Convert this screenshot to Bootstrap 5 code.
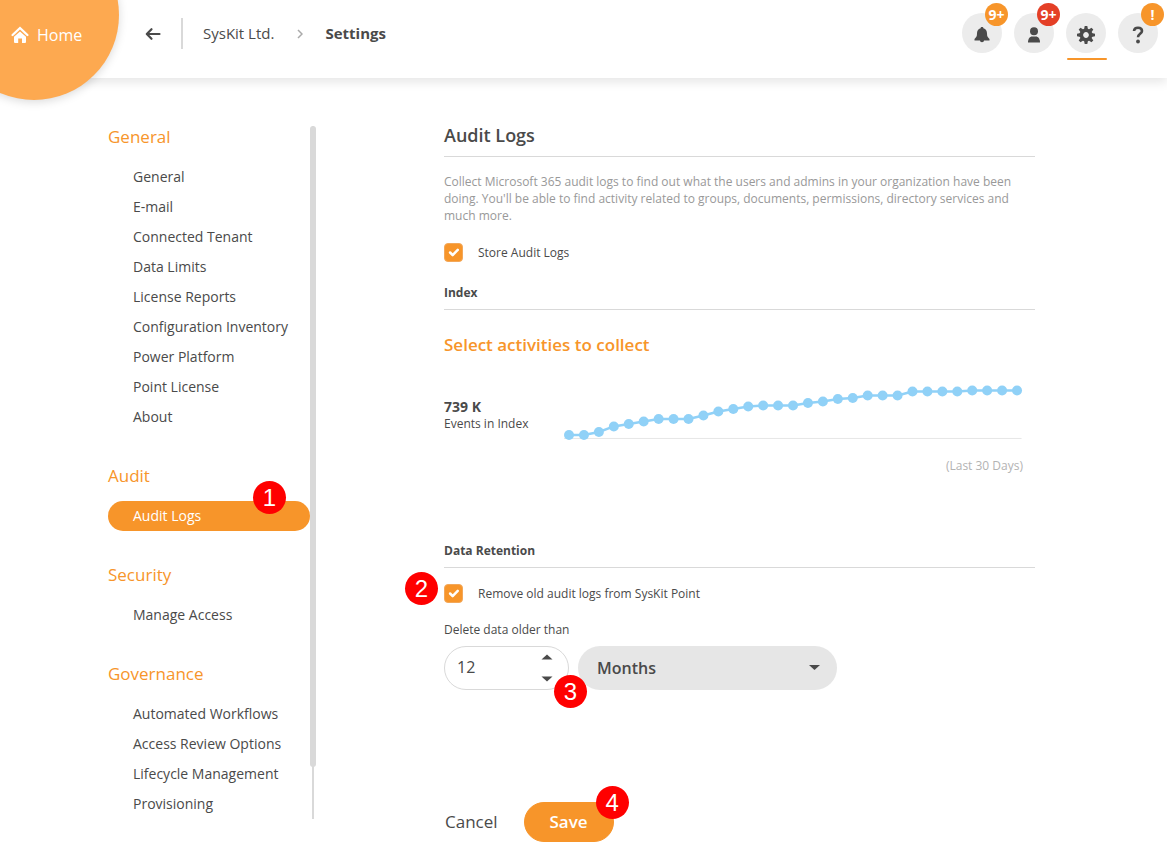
<!DOCTYPE html>
<html lang="en">
<head>
<meta charset="utf-8">
<meta name="viewport" content="width=device-width, initial-scale=1">
<title>Settings - Audit Logs</title>
<link href="https://cdn.jsdelivr.net/npm/bootstrap@5.3.0/dist/css/bootstrap.min.css" rel="stylesheet">
<style>
:root { --accent: #f7952a; --ink: #4a4a4a; --rule: #d9d9d9; }
body { font-family: "Open Sans", "Noto Sans", sans-serif; font-size: 12px; line-height: 17px; color: var(--ink); background: #fff; }
a { text-decoration: none; color: inherit; }

.topbar { height: 78px; padding: 0 9px 0 145px; box-shadow: 0 4px 10px rgba(0,0,0,.1); }
.home-link { left: -51px; top: -70px; width: 170px; height: 170px; padding: 40px 0 0 62px; background: #fda950; color: #fff; font-size: 16px; box-shadow: 0 2px 10px rgba(0,0,0,.15); }
.home-link:hover { color: #fff; }
.crumbs { height: 67px; font-size: 15px; }
.crumb-rule { width: 2px; height: 31px; background: var(--rule); margin: 0 20px; }
.crumb-sep { margin: 0 22px 0 23px; }
.tool-btn { width: 40px; height: 40px; background: #ececec; color: var(--ink); }
.tool-group { gap: 12px; margin-top: 13px; }
.tool-badge { top: -10px; left: 23px; width: 23px; height: 23px; font-size: 14px; font-weight: 700; color: #fff; background: var(--accent); }
.tool-badge.alert-red { background: #e43f26; }
.tool-on::after { content: ""; position: absolute; left: 1px; right: -1px; bottom: -7px; height: 2px; border-radius: 2px; background: var(--accent); }

.page-body { padding: 44px 132px 13px 108px; }
.side-nav { width: 202px; }
.side-title { font-size: 17px; line-height: 30px; margin: 0 0 10px; font-weight: 400; color: var(--accent); }
.side-nav section + section { margin-top: 29px; }
.side-link { padding: 0 25px; line-height: 30px; font-size: 14px; border-radius: 15px; }
.side-link.current { background: var(--accent); color: #fff; }
.scroll-track { width: 6px; height: 693px; background: linear-gradient(#d9d9d9, #d9d9d9) center / 2px 100% no-repeat; }
.scroll-thumb { height: 641px; border-radius: 3px; background: #d9d9d9; }

.settings { margin-left: 128px; }
.main-title { font-size: 18px; line-height: 26px; font-weight: 600; padding-bottom: 8px; margin: 0 0 16px; border-bottom: 1px solid var(--rule); }
.sub-title { font-size: 12px; line-height: 18px; font-weight: 700; padding-bottom: 7px; margin: 0; border-bottom: 1px solid var(--rule); }
.sub-title.index-title { margin-top: 22px; }
.intro { color: #999; margin: 0 0 19px; }
.tick-row { gap: 15px; height: 19px; }
.form-check-input.tick { width: 19px; height: 19px; margin: 0; border-radius: 4px; border: 1px solid #f3a85a; }
.form-check-input.tick:checked { background-color: var(--accent); border-color: #f3a85a; background-size: 17px; }
.activities { font-size: 17px; line-height: 24px; font-weight: 600; color: var(--accent); margin: 23px 0 27px; }
.total { font-size: 14px; line-height: 16px; font-weight: 700; }
.chart { margin: 0 12px 0 35px; min-width: 0; }
.period { color: #b3b3b3; margin: 17px 0 68px; }
.age-label { margin-top: 18px; }
.age-row { gap: 9px; }
.num-box { width: 125px; height: 44px; border: 1px solid var(--rule); border-radius: 22px; padding: 0 15px 0 12px; }
.num-box input { width: 70px; border: 0; padding: 0; font-size: 16px; color: var(--ink); outline: 0; }
.step { border: 0; background: none; padding: 0; line-height: 0; color: var(--ink); }
.unit-select { height: 44px; border: 0; border-radius: 22px; width: 259px; padding: 0 40px 0 19px; font-size: 16px; font-weight: 600; color: var(--ink); background-color: #e6e6e6; background-size: 11px 5px; background-position: right 17px top 19px;
  --bs-form-select-bg-img: url("data:image/svg+xml,%3Csvg xmlns='http://www.w3.org/2000/svg' viewBox='0 0 11 5'%3E%3Cpath d='M0 0h11L5.5 5z' fill='%234a4a4a'/%3E%3C/svg%3E");
  background-image: var(--bs-form-select-bg-img); }
.actions { margin-top: 112px; gap: 26px; }
.btn-cancel { border: 0; background: none; padding: 0 0 0 1px; font-size: 17px; color: var(--ink); }
.btn-save { --bs-btn-bg: #f7952a; --bs-btn-color: #fff; --bs-btn-border-color: #f7952a; --bs-btn-hover-bg: #e98618; --bs-btn-hover-color: #fff; width: 90px; height: 40px; border-radius: 20px; font-size: 17px; font-weight: 600; padding: 0; }
.callout { width: 33px; height: 33px; background: #f00; color: #fff; font: 24px/33px "Liberation Sans", sans-serif; text-align: center; border-radius: 50%; position: absolute; z-index: 2; }
.callout-nav { right: 24px; top: -20px; }
.callout-tick { left: -39px; top: -12px; }
.callout-num { right: -19px; bottom: -19px; }
.callout-save { right: -16px; top: -17px; }
</style>
</head>
<body>
<header class="topbar d-flex justify-content-between position-relative">
  <a class="home-link rounded-circle position-absolute d-flex align-items-center" href="#">
    <svg width="18" height="18" viewBox="0 0 18 18" class="me-2" aria-hidden="true"><path d="M1.6 9 9 2l7.400 7" fill="none" stroke="#fff" stroke-width="2.300" stroke-linecap="round"/><path d="M3 10.800 9 5.600l6 5.200V16a1 1 0 0 1-1 1h-3v-4.500H7.200V17H4a1 1 0 0 1-1-1z" fill="#fff"/></svg>Home
  </a>
  <nav class="crumbs d-flex align-items-center" aria-label="Breadcrumb">
    <a href="#" aria-label="Back"><svg class="d-block" width="16" height="14" viewBox="0 0 16 14"><path d="M6.500 2.200 1.800 7l4.700 4.800M2 7h12.500" fill="none" stroke="#4a4a4a" stroke-width="2.200" stroke-linecap="round" stroke-linejoin="round"/></svg></a>
    <span class="crumb-rule"></span>
    <a href="#">SysKit Ltd.</a>
    <svg class="crumb-sep" width="6" height="10" viewBox="0 0 6 10" aria-hidden="true"><path d="m1 1 4 4-4 4" fill="none" stroke="#aaa" stroke-width="1.500"/></svg>
    <strong aria-current="page">Settings</strong>
  </nav>
  <div class="tool-group d-flex">
    <button class="tool-btn btn p-0 border-0 rounded-circle position-relative" aria-label="Notifications">
      <svg width="16" height="18" viewBox="0 0 16 18"><path d="M8 1c.9 0 1.400.5 1.400 1.300C12 3 13 5 13 7.500c0 3 .8 3.800 2.500 5.500v1.500H.5V13C2.200 11.300 3 10.500 3 7.500 3 5 4 3 6.600 2.300 6.600 1.500 7.100 1 8 1zM6 14.500h4c0 1-.9 1.700-2 1.700s-2-.7-2-1.700z" fill="currentColor"/></svg>
      <span class="tool-badge position-absolute rounded-circle d-flex align-items-center justify-content-center">9+</span>
    </button>
    <button class="tool-btn btn p-0 border-0 rounded-circle position-relative" aria-label="Account">
      <svg width="14" height="16" viewBox="0 0 14 16"><circle cx="7" cy="4.300" r="4" fill="currentColor"/><path d="M1 15.500C1 11.500 3 9.500 5 9.500h4c2 0 4 2 4 6z" fill="currentColor"/></svg>
      <span class="tool-badge alert-red position-absolute rounded-circle d-flex align-items-center justify-content-center">9+</span>
    </button>
    <button class="tool-btn tool-on btn p-0 border-0 rounded-circle position-relative" aria-label="Settings">
      <svg width="18" height="18" viewBox="-9 -9 18 18"><circle r="4.700" fill="none" stroke="currentColor" stroke-width="3.600"/><g fill="currentColor"><path id="tooth" d="M-2-5.500-1.300-9h2.600L2-5.500z"/><use href="#tooth" transform="rotate(45)"/><use href="#tooth" transform="rotate(90)"/><use href="#tooth" transform="rotate(135)"/><use href="#tooth" transform="rotate(180)"/><use href="#tooth" transform="rotate(225)"/><use href="#tooth" transform="rotate(270)"/><use href="#tooth" transform="rotate(315)"/></g></svg>
    </button>
    <button class="tool-btn btn p-0 border-0 rounded-circle position-relative" aria-label="Help">
      <svg width="12" height="18" viewBox="0 0 12 18"><path d="M2 5C2.200 2.800 3.800 1.800 6 1.800S10 3 10 5c0 2.800-4 3-4 6.300" fill="none" stroke="currentColor" stroke-width="2.600"/><circle cx="6" cy="15.500" r="1.900" fill="currentColor"/></svg>
      <span class="tool-badge position-absolute rounded-circle d-flex align-items-center justify-content-center">!</span>
    </button>
  </div>
</header>

<div class="page-body d-flex align-items-start">
  <nav class="side-nav flex-shrink-0" aria-label="Settings">
    <section>
      <h2 class="side-title">General</h2>
      <a class="side-link d-block" href="#">General</a>
      <a class="side-link d-block" href="#">E-mail</a>
      <a class="side-link d-block" href="#">Connected Tenant</a>
      <a class="side-link d-block" href="#">Data Limits</a>
      <a class="side-link d-block" href="#">License Reports</a>
      <a class="side-link d-block text-nowrap" href="#">Configuration Inventory</a>
      <a class="side-link d-block" href="#">Power Platform</a>
      <a class="side-link d-block" href="#">Point License</a>
      <a class="side-link d-block" href="#">About</a>
    </section>
    <section>
      <h2 class="side-title">Audit</h2>
      <a class="side-link current d-block position-relative" href="#" aria-current="page">Audit Logs<span class="callout callout-nav">1</span></a>
    </section>
    <section>
      <h2 class="side-title">Security</h2>
      <a class="side-link d-block" href="#">Manage Access</a>
    </section>
    <section>
      <h2 class="side-title">Governance</h2>
      <a class="side-link d-block" href="#">Automated Workflows</a>
      <a class="side-link d-block" href="#">Access Review Options</a>
      <a class="side-link d-block" href="#">Lifecycle Management</a>
      <a class="side-link d-block" href="#">Provisioning</a>
    </section>
  </nav>
  <div class="scroll-track flex-shrink-0 mt-1"><div class="scroll-thumb"></div></div>

  <main class="settings flex-grow-1">
    <h1 class="main-title">Audit Logs</h1>
    <p class="intro">Collect Microsoft 365 audit logs to find out what the users and admins in your organization have been doing. You'll be able to find activity related to groups, documents, permissions, directory services and much more.</p>
    <div class="tick-row d-flex align-items-center">
      <input class="form-check-input tick" type="checkbox" id="store" checked>
      <label for="store">Store Audit Logs</label>
    </div>

    <h2 class="sub-title index-title">Index</h2>
    <h3 class="activities"><a href="#">Select activities to collect</a></h3>
    <div class="d-flex align-items-end">
      <div class="text-nowrap pb-2"><div class="total">739 K</div><div>Events in Index</div></div>
      <div class="chart flex-grow-1">
        <svg class="d-block w-100" viewBox="0 0 460 56" role="img" aria-label="Events in index over the last 30 days">
          <path d="M1 54.500h458" stroke="#e6e6e6"/>
          <polyline id="line" fill="none" stroke="#90d1f7" stroke-width="2.500"/>
          <g id="dots" fill="#90d1f7"></g>
        </svg>
      </div>
    </div>
    <p class="period text-end me-2 pe-1">(Last 30 Days)</p>

    <h2 class="sub-title">Data Retention</h2>
    <div class="tick-row d-flex align-items-center position-relative mt-3">
      <span class="callout callout-tick">2</span>
      <input class="form-check-input tick" type="checkbox" id="remove" checked>
      <label for="remove">Remove old audit logs from SysKit Point</label>
    </div>
    <label class="age-label d-block" for="age">Delete data older than</label>
    <div class="age-row d-flex mt-2">
      <div class="num-box d-flex align-items-center justify-content-between position-relative">
        <input type="text" inputmode="numeric" id="age" value="12">
        <div class="d-flex flex-column gap-3">
          <button class="step" aria-label="More"><svg width="12" height="6" viewBox="0 0 12 6"><path d="M.5 5.500 6 .5l5.500 5z" fill="currentColor"/></svg></button>
          <button class="step" aria-label="Less"><svg width="12" height="6" viewBox="0 0 12 6"><path d="M.5.5 6 5.500l5.500-5z" fill="currentColor"/></svg></button>
        </div>
        <span class="callout callout-num">3</span>
      </div>
      <select class="unit-select form-select" aria-label="Unit"><option>Months</option><option>Days</option></select>
    </div>
    <div class="actions d-flex align-items-center">
      <button class="btn-cancel">Cancel</button>
      <button class="btn btn-save position-relative">Save<span class="callout callout-save">4</span></button>
    </div>
  </main>
</div>
<script src="https://cdn.jsdelivr.net/npm/bootstrap@5.3.0/dist/js/bootstrap.bundle.min.js"></script>
<script>
// Daily index size, as heights in the chart's own units.
const ys = [51,51,48,42.5,40,37.5,35,35,35,31.5,27.5,25,22.5,21.5,21.5,21.5,19,17.5,15,14,11.5,11.5,11.5,7.5,7.5,7.5,7.5,6.5,6.5,6.5,6.5];
const pts = ys.map((y, i) => [6 + i * 448.5 / (ys.length - 1), y]);
document.getElementById('line').setAttribute('points', pts.map(p => p.join()).join(' '));
document.getElementById('dots').innerHTML = pts.map(p => `<circle cx="${p[0]}" cy="${p[1]}" r="5"/>`).join('');
</script>
</body>
</html>
